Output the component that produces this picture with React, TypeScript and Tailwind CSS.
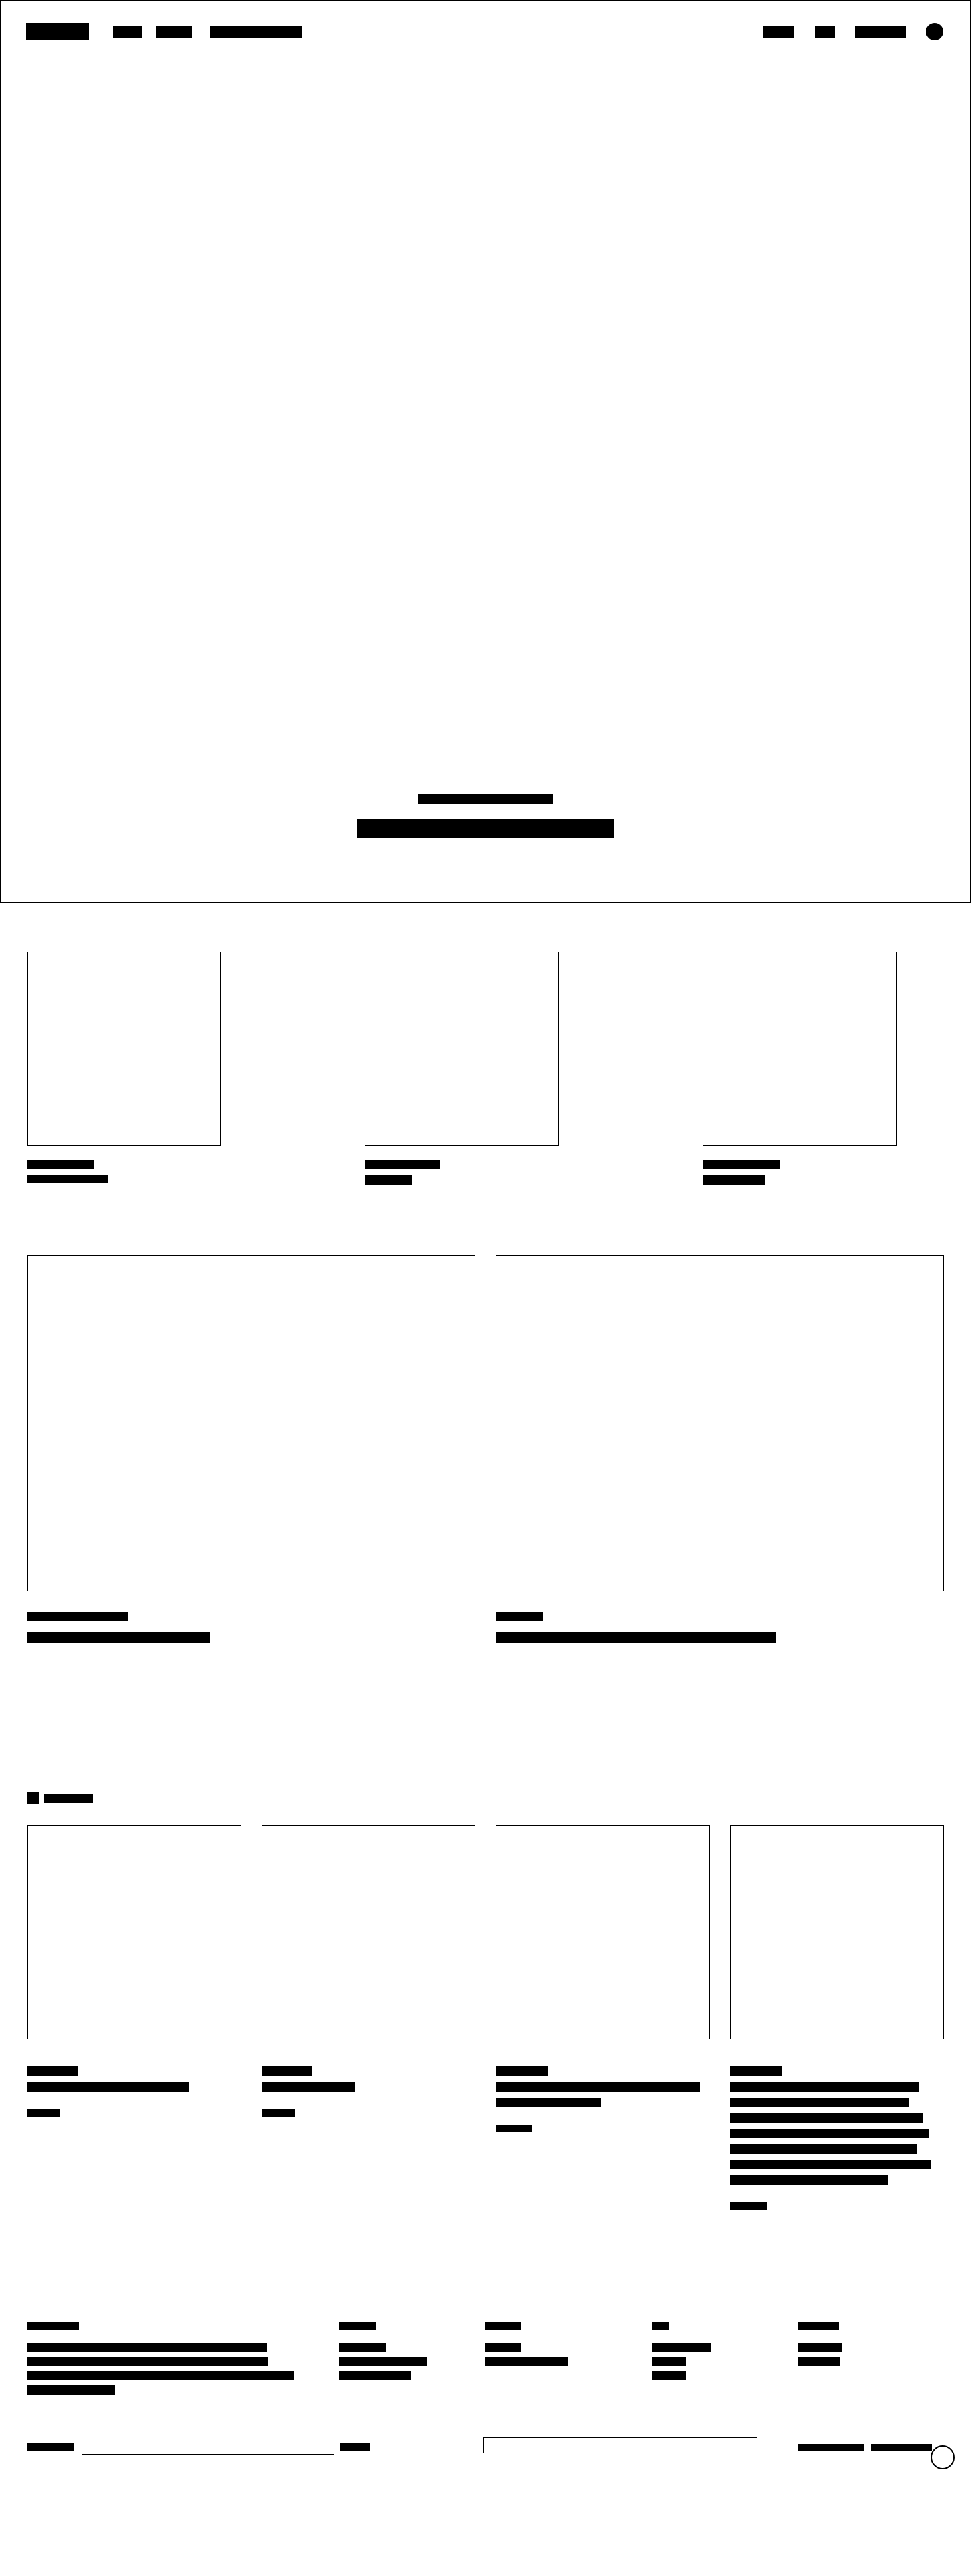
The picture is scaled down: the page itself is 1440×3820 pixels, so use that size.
import type { ReactNode } from "react";

/** A solid block that stands in for one line of text. */
function Bar({ className }: { className: string }) {
  return <span className={`block shrink-0 bg-black ${className}`} />;
}

function BarLink({ className, label }: { className: string; label: string }) {
  return <a href="#" aria-label={label} className={`block shrink-0 bg-black ${className}`} />;
}

function Header() {
  return (
    <header className="flex items-center justify-between pt-[33px] pr-10 pl-[37px]">
      <div className="flex items-center">
        <BarLink label="Home" className="h-[26px] w-[94px]" />
        <nav aria-label="Main" className="ml-9 flex items-center">
          <BarLink label="Menu 1" className="h-[18px] w-[42px]" />
          <BarLink label="Menu 2" className="ml-[21px] h-[18px] w-[53px]" />
          <BarLink label="Menu 3" className="ml-[27px] h-[18px] w-[137px]" />
        </nav>
      </div>
      <nav aria-label="Account" className="flex items-center gap-[30px]">
        <BarLink label="Account 1" className="h-[18px] w-[46px]" />
        <BarLink label="Account 2" className="h-[18px] w-[30px]" />
        <BarLink label="Account 3" className="h-[18px] w-[75px]" />
        <button type="button" aria-label="Profile" className="size-[26px] rounded-full bg-black" />
      </nav>
    </header>
  );
}

const features = [
  { title: "w-[99px]", text: "h-3 w-[120px]" },
  { title: "w-[111px]", text: "h-3.5 w-[70px]" },
  { title: "w-[115px]", text: "h-[15px] w-[93px]" },
];

const stories = [
  { title: "w-[150px]", text: "w-[272px]" },
  { title: "w-[70px]", text: "w-[416px]" },
];

const products = [
  { name: "w-[75px]", lines: ["w-[241px]"], price: "w-[49px]" },
  { name: "w-[75px]", lines: ["w-[139px]"], price: "w-[49px]" },
  { name: "w-[77px]", lines: ["w-[303px]", "w-[156px]"], price: "w-[54px]" },
  {
    name: "w-[77px]",
    lines: ["w-[280px]", "w-[265px]", "w-[286px]", "w-[294px]", "w-[277px]", "w-[297px]", "w-[234px]"],
    price: "w-[54px]",
  },
];

const linkColumns = [
  { heading: "w-[54px]", links: ["w-[70px]", "w-[130px]", "w-[107px]"] },
  { heading: "w-[53px]", links: ["w-[53px]", "w-[123px]"] },
  { heading: "w-[25px]", links: ["w-[87px]", "w-[51px]", "w-[51px]"] },
  { heading: "w-[60px]", links: ["w-[64px]", "w-[62px]"] },
];

function FooterColumn({ heading, children }: { heading: string; children: ReactNode }) {
  return (
    <div>
      <Bar className={`h-3 ${heading}`} />
      <div className="mt-[19px] flex flex-col gap-[7px]">{children}</div>
    </div>
  );
}

export default function App() {
  return (
    <div className="relative bg-white pb-[180px]">
      <section className="flex h-[1339px] flex-col justify-between border border-black">
        <Header />
        <div className="flex flex-col items-center pb-[95px]">
          <Bar className="h-4 w-[200px]" />
          <Bar className="mt-[22px] h-7 w-[380px]" />
        </div>
      </section>

      <main className="px-10">
        <section className="grid grid-cols-3 gap-[143px] pt-[72px]">
          {features.map((item, i) => (
            <article key={i}>
              <div className="size-72 border border-black" />
              <Bar className={`mt-[21px] h-[13px] ${item.title}`} />
              <Bar className={`mt-2.5 ${item.text}`} />
            </article>
          ))}
        </section>

        <section className="grid grid-cols-2 gap-[30px] pt-[103px]">
          {stories.map((item, i) => (
            <article key={i}>
              <div className="aspect-4/3 border border-black" />
              <Bar className={`mt-[31px] h-[13px] ${item.title}`} />
              <Bar className={`mt-4 h-4 ${item.text}`} />
            </article>
          ))}
        </section>

        <section className="pt-[222px]">
          <div className="flex items-center gap-[7px]">
            <Bar className="h-[17px] w-[18px]" />
            <Bar className="h-[13px] w-[73px]" />
          </div>
          <div className="mt-8 grid grid-cols-4 gap-[30px]">
            {products.map((item, i) => (
              <article key={i}>
                <div className="aspect-square border border-black" />
                <Bar className={`mt-10 h-3.5 ${item.name}`} />
                <div className="mt-2.5 flex flex-col gap-[9px]">
                  {item.lines.map((line, j) => (
                    <Bar key={j} className={`h-3.5 ${line}`} />
                  ))}
                </div>
                <Bar className={`mt-[26px] h-[11px] ${item.price}`} />
              </article>
            ))}
          </div>
        </section>
      </main>

      <footer className="px-10 pt-[166px]">
        <div className="grid grid-cols-[463fr_217fr_247fr_217fr_216fr]">
          <FooterColumn heading="w-[77px]">
            <Bar className="h-3.5 w-[356px]" />
            <Bar className="h-3.5 w-[358px]" />
            <Bar className="h-3.5 w-[396px]" />
            <Bar className="h-3.5 w-[130px]" />
          </FooterColumn>
          {linkColumns.map((column, i) => (
            <FooterColumn key={i} heading={column.heading}>
              {column.links.map((link, j) => (
                <BarLink key={j} label={`Footer link ${i + 1}.${j + 1}`} className={`h-3.5 ${link}`} />
              ))}
            </FooterColumn>
          ))}
        </div>

        <div className="mt-[63px] grid grid-cols-[677fr_466fr_217fr] items-start">
          <form className="flex items-start" onSubmit={(e) => e.preventDefault()}>
            <label htmlFor="email" aria-label="Email" className="mt-[9px] h-[11px] w-[70px] shrink-0 bg-black" />
            <input
              id="email"
              type="email"
              className="ml-[11px] h-[26px] w-[375px] min-w-0 border-b border-black bg-transparent outline-none"
            />
            <button type="submit" aria-label="Submit" className="mt-[9px] ml-2 h-[11px] w-[45px] shrink-0 bg-black" />
          </form>
          <select
            aria-label="Region"
            className="h-6 w-[406px] max-w-full appearance-none border border-black bg-white"
          />
          <div className="flex gap-2.5 pt-2.5">
            <Bar className="h-2.5 w-[98px]" />
            <BarLink label="Legal" className="h-2.5 w-[91px]" />
          </div>
        </div>
      </footer>

      <button
        type="button"
        aria-label="Help"
        className="absolute top-[3626px] right-6 size-9 rounded-full border-2 border-black bg-white"
      />
    </div>
  );
}
